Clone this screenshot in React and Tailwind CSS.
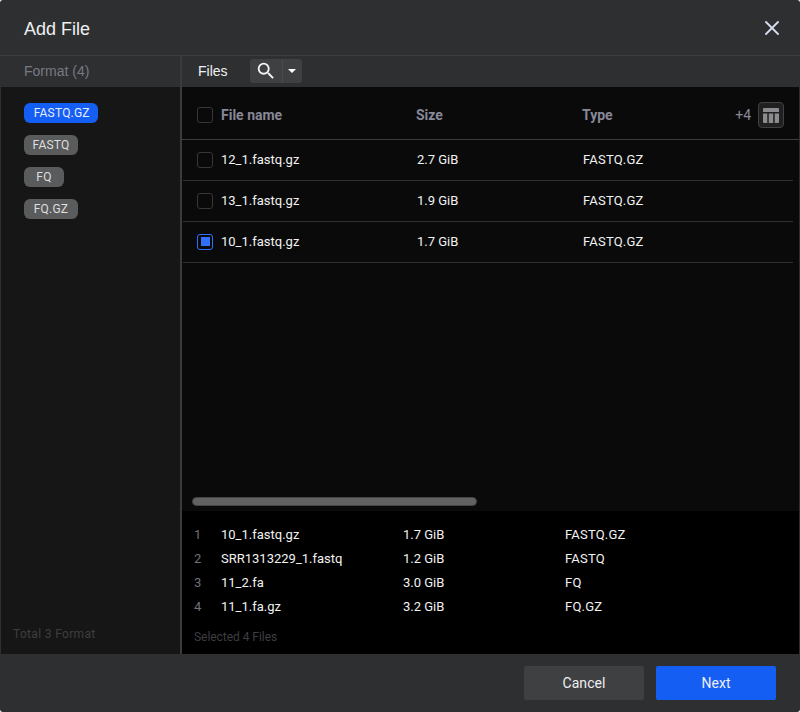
const formats = [
  { name: 'FASTQ.GZ', style: 'w-[74px] bg-[#155ef3] pl-[1.5px]', text: 'text-[#e6ecfb]' },
  { name: 'FASTQ', style: 'w-[54px] bg-[#5a5b5d]', text: 'text-[#dedede]' },
  { name: 'FQ', style: 'w-10 bg-[#5a5b5d]', text: 'text-[#dedede]' },
  { name: 'FQ.GZ', style: 'w-[54px] bg-[#5a5b5d]', text: 'text-[#dedede]' },
];

const files = [
  { name: '12_1.fastq.gz', size: '2.7 GiB', type: 'FASTQ.GZ' },
  { name: '13_1.fastq.gz', size: '1.9 GiB', type: 'FASTQ.GZ' },
  { name: '10_1.fastq.gz', size: '1.7 GiB', type: 'FASTQ.GZ', checked: true },
];

const selected = [
  ['10_1.fastq.gz', '1.7 GiB', 'FASTQ.GZ'],
  ['SRR1313229_1.fastq', '1.2 GiB', 'FASTQ'],
  ['11_2.fa', '3.0 GiB', 'FQ'],
  ['11_1.fa.gz', '3.2 GiB', 'FQ.GZ'],
];

function Checkbox({ checked }) {
  return (
    <span
      className={`flex h-4 w-4 shrink-0 items-start rounded-[3px] border pt-[2px] pl-[3px] ${
        checked ? 'border-[#2f6ffa]' : 'border-[#363636]'
      }`}
    >
      {checked && <span className="h-[9px] w-[9px] bg-[#2f70ff]" />}
    </span>
  );
}

export default function App() {
  return (
    <div className="h-[712px] w-[800px] bg-white font-['Roboto',sans-serif]">
      <div className="flex h-full flex-col overflow-hidden rounded-[3px] bg-[#2e2f31]">
        <header className="flex h-14 shrink-0 items-center justify-between border-b border-[#3d3e40] pr-[21px] pl-6">
          <h1 className="pt-[3px] font-['Liberation_Sans',sans-serif] text-[18px] leading-6 text-[#eeeff2]">Add File</h1>
          <svg className="h-[14px] w-[14px]" viewBox="0 0 14 14" fill="none" stroke="#d5ddee" strokeWidth="1.8" strokeLinecap="round">
            <path d="M1 1l12 12M13 1L1 13" />
          </svg>
        </header>

        <div className="flex min-h-0 flex-1">
          <aside className="flex w-[182px] shrink-0 flex-col border-r-2 border-[#3a3b3d]">
            <div className="flex h-[31px] shrink-0 items-center pb-[2px] pl-6 font-['Liberation_Sans',sans-serif] text-sm text-[#777983]">
              Format (4)
            </div>
            <div className="flex flex-1 flex-col border-l border-[#2e2f31] bg-[#161616] pt-4">
              <div className="flex flex-1 flex-col items-start gap-3 pl-[23px]">
                {formats.map((f) => (
                  <span
                    key={f.name}
                    className={`flex h-5 items-center justify-center rounded-[6px] text-xs tracking-[0.2px] ${f.style} ${f.text}`}
                  >
                    {f.name}
                  </span>
                ))}
              </div>
              <p className="pb-3 pl-3 text-xs leading-4 tracking-[0.33px] text-[#3e3e40]">Total 3 Format</p>
            </div>
          </aside>

          <main className="flex min-w-0 flex-1 flex-col">
            <div className="flex h-[31px] shrink-0 items-center pb-px pl-4">
              <span className="w-[52px] pb-px font-['Liberation_Sans',sans-serif] text-sm text-[#eeeff2]">Files</span>
              <div className="flex h-6 overflow-hidden rounded-[3px] bg-[#3f4042]">
                <span className="flex w-[33px] items-center justify-center border-r border-[#4a4b4d]">
                  <svg className="h-[22px] w-[22px]" viewBox="0 0 24 24" fill="#f4f4f4">
                    <path d="M15.5 14h-.79l-.28-.27A6.47 6.47 0 0 0 16 9.5 6.5 6.5 0 1 0 9.5 16c1.61 0 3.09-.59 4.23-1.57l.27.28v.79l5 4.99L20.49 19l-4.99-5zm-6 0C7.01 14 5 11.99 5 9.5S7.01 5 9.5 5 14 7.01 14 9.5 11.99 14 9.5 14z" />
                  </svg>
                </span>
                <span className="flex w-[19px] items-center pl-[5px]">
                  <svg className="h-1 w-2" viewBox="0 0 8 4" fill="#fff">
                    <path d="M0 0h8L4 4z" />
                  </svg>
                </span>
              </div>
            </div>

            <div className="flex flex-1 flex-col border-r border-[#2e2f31] bg-[#0a0a0a]">
              <div className="flex h-[53px] shrink-0 items-center border-b border-[#3c3c3c] pt-1 pr-[15px] pl-[15px] text-sm font-bold text-[#878898]">
                <Checkbox />
                <span className="ml-2 w-[195px]">File name</span>
                <span className="w-[166px]">Size</span>
                <span className="flex-1">Type</span>
                <span className="mr-[7px] font-normal">+4</span>
                <span className="flex h-[26px] w-[26px] items-start justify-center rounded-[4px] border border-[#414141] bg-[#202020] pt-[5px]">
                  <svg className="h-[15px] w-4" viewBox="0 0 16 15" fill="#8b8c90">
                    <path d="M1 0h14a1 1 0 0 1 1 1v3H0V1a1 1 0 0 1 1-1zM0 5.6h4.3V15H1a1 1 0 0 1-1-1zM5.8 5.6h4.4V15H5.8zM11.7 5.6H16V14a1 1 0 0 1-1 1h-3.3z" />
                  </svg>
                </span>
              </div>
              <div className="flex flex-col pr-[6px] pl-px">
                {files.map((f) => (
                  <div key={f.name} className="flex h-[41px] items-center border-b border-[#303030] pl-[14px] text-[13px] text-[#f2f2f2]">
                    <Checkbox checked={f.checked} />
                    <span className="ml-2 w-[196px]">{f.name}</span>
                    <span className="w-[166px]">{f.size}</span>
                    <span className="tracking-[0.2px]">{f.type}</span>
                  </div>
                ))}
              </div>
              <div className="flex flex-1 items-end pb-[5px] pl-[10px]">
                <div className="h-[9px] w-[285px] rounded-full border border-[#454545] bg-[#626262]" />
              </div>
              <div className="h-[143px] shrink-0 bg-black pt-3 pl-3">
                {selected.map(([name, size, type], i) => (
                  <div key={name} className="flex h-6 items-center text-[13px] text-[#f2f2f2]">
                    <span className="w-[27px] text-[#70717b]">{i + 1}</span>
                    <span className="w-[182px]">{name}</span>
                    <span className="w-[162px]">{size}</span>
                    <span className="tracking-[0.2px]">{type}</span>
                  </div>
                ))}
                <p className="mt-[10px] text-xs leading-4 tracking-[-0.04px] text-[#3e3e40]">Selected 4 Files</p>
              </div>
            </div>
          </main>
        </div>

        <footer className="flex h-[58px] shrink-0 justify-end gap-3 pt-3 pr-6 text-sm tracking-[0.05px]">
          <button className="h-[34px] w-[120px] rounded-[2px] bg-[#3f4042] text-[#eeeff2]">Cancel</button>
          <button className="h-[34px] w-[120px] rounded-[2px] bg-[#155ef3] text-[#eeeff2]">Next</button>
        </footer>
      </div>
    </div>
  );
}
